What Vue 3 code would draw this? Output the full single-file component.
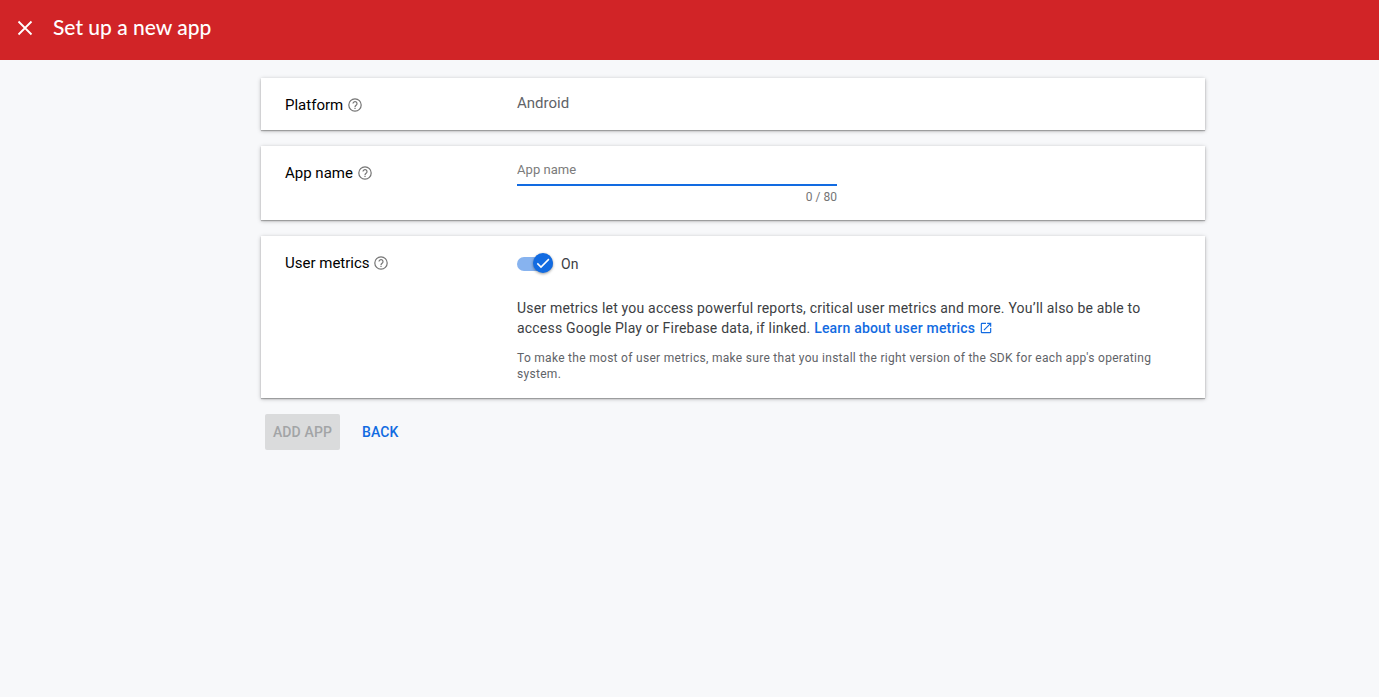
<script setup>
import { ref } from 'vue'
const enabled = ref(true)
const name = ref('')
</script>

<template>
  <div class="page">
    <header class="bar">
      <svg class="close" viewBox="0 0 24 24"><path d="M5.500 5.500l13 13M18.500 5.500l-13 13" /></svg>
      <h1>Set up a new app</h1>
    </header>
    <main>
      <section class="card platform">
        <div class="label">
          <span>Platform</span>
          <svg class="help" viewBox="0 0 16 16"><circle cx="8" cy="8" r="6.200" /><path d="M6 6.600a2 2 0 1 1 3.300 1.500C8.500 8.700 8 9 8 9.900" /><path d="M8 10.700v1.200" /></svg>
        </div>
        <div class="android">Android</div>
      </section>
      <section class="card appname">
        <div class="label">
          <span>App name</span>
          <svg class="help" viewBox="0 0 16 16"><circle cx="8" cy="8" r="6.200" /><path d="M6 6.600a2 2 0 1 1 3.300 1.500C8.500 8.700 8 9 8 9.900" /><path d="M8 10.700v1.200" /></svg>
        </div>
        <div class="field">
          <input v-model="name" maxlength="80" placeholder="App name" />
          <div class="count">{{ name.length }} / 80</div>
        </div>
      </section>
      <section class="card metrics">
        <div class="label">
          <span>User metrics</span>
          <svg class="help" viewBox="0 0 16 16"><circle cx="8" cy="8" r="6.200" /><path d="M6 6.600a2 2 0 1 1 3.300 1.500C8.500 8.700 8 9 8 9.900" /><path d="M8 10.700v1.200" /></svg>
        </div>
        <div class="body">
          <div class="toggle-row" @click="enabled = !enabled">
            <div class="track"><div class="knob"><svg viewBox="0 0 20 20"><path d="M4.300 10.400l3.700 3.700 7.900-8" /></svg></div></div>
            <span>{{ enabled ? 'On' : 'Off' }}</span>
          </div>
          <p class="desc">User metrics let you access powerful reports, critical user metrics and more. You’ll also be able to<br />access Google Play or Firebase data, if linked. <a>Learn about user metrics<svg viewBox="0 0 24 24"><path d="M19 19H5V5h7V3H5a2 2 0 0 0-2 2v14a2 2 0 0 0 2 2h14c1.100 0 2-.9 2-2v-7h-2v7zM14 3v2h3.590l-9.830 9.830 1.410 1.410L19 6.410V10h2V3h-7z" /></svg></a></p>
          <p class="note">To make the most of user metrics, make sure that you install the right version of the SDK for each app's operating<br />system.</p>
        </div>
      </section>
      <div class="actions">
        <button class="add" disabled>ADD APP</button>
        <button class="back">BACK</button>
      </div>
    </main>
  </div>
</template>

<style>
body { margin: 0; background: #f7f8fa; }
</style>

<style scoped>
.page { min-height: 697px; background: #f7f8fa; font-family: Roboto, sans-serif; }
.bar { height: 60px; box-sizing: border-box; background: #d12427; display: flex; align-items: center; padding: 0 13px 4px; color: #fff; }
.close { width: 24px; height: 24px; fill: none; stroke: #fff; stroke-width: 1.8; }
h1 { margin: 0 0 3px 16px; font: 500 21px/28px Lato, sans-serif; letter-spacing: 0; white-space: nowrap; }
main { width: 944px; margin-left: 261px; padding-top: 18px; }
.card { box-sizing: border-box; background: #fff; box-shadow: 0 1px 1px rgba(0,0,0,.24), 0 1px 4px rgba(0,0,0,.28); margin-bottom: 16px; padding-left: 24px; display: flex; align-items: flex-start; }
.platform { height: 52px; }
.appname { height: 74px; }
.metrics { height: 162px; }
.label { width: 232px; flex: none; padding-top: 17px; display: flex; align-items: center; font-size: 15px; line-height: 20px; letter-spacing: 0; color: #000; }
.help { width: 16px; height: 16px; margin-left: 3.6px; fill: none; stroke: #757575; stroke-width: 1.2; }
.android { font-size: 15px; line-height: 20px; padding-top: 15px; letter-spacing: 0; color: #5f6368; }
.field { width: 320px; padding-top: 14px; }
input { display: block; box-sizing: border-box; width: 320px; height: 26px; border: 0; border-bottom: 2px solid #126be1; padding: 0 0 5px; font: 13px/18px Roboto, sans-serif; letter-spacing: .05px; outline: none; background: none; }
input::placeholder { color: #7b7b7b; opacity: 1; }
.count { text-align: right; font-size: 12px; line-height: 16px; margin-top: 3px; letter-spacing: 0; color: #757575; }
.toggle-row { display: flex; align-items: center; height: 20px; margin-top: 18px; font-size: 14px; letter-spacing: .2px; color: #3c4043; }
.track { width: 36px; height: 14px; border-radius: 7px; background: #87b3ef; display: flex; justify-content: flex-end; align-items: center; margin-right: 8px; }
.knob { flex: none; width: 20px; height: 20px; margin-bottom: 2px; border-radius: 50%; background: #126be1; box-shadow: 0 1px 3px rgba(0,0,0,.4); }
.knob svg { display: block; width: 20px; height: 20px; fill: none; stroke: #fff; stroke-width: 1.5; }
p { margin: 0; white-space: nowrap; }
.desc { margin-top: 24px; font-size: 14px; line-height: 20px; letter-spacing: .195px; color: #3c4043; }
.desc a { color: #126be1; font-weight: 500; }
.desc a svg { width: 14px; height: 14px; fill: currentColor; vertical-align: -2px; margin-left: 4px; }
.note { margin-top: 12px; font-size: 12px; line-height: 16px; letter-spacing: .295px; color: #5f6368; }
.actions { display: flex; padding-left: 4px; }
button { border: 0; height: 36px; font: 500 14px/20px Roboto, sans-serif; padding: 0; letter-spacing: .15px; white-space: nowrap; }
.add { width: 75px; background: #dadbdc; color: #a2a4a6; border-radius: 2px; }
.back { margin-left: 22px; color: #126be1; background: none; }
</style>
